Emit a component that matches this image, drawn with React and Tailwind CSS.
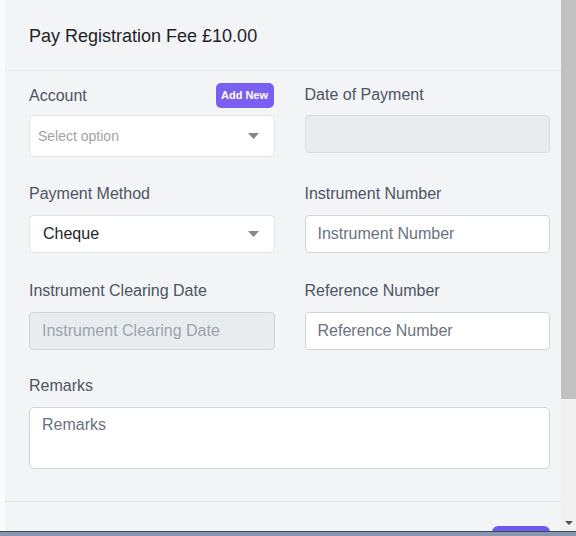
import React from "react";

function Caret() {
  return (
    <svg width="11" height="6" viewBox="0 0 11 6" className="shrink-0">
      <path d="M0 0 L11 0 L5.5 6 Z" fill="#888888" />
    </svg>
  );
}

function Label({ children }) {
  return <div className="h-6 mb-[9px] text-base leading-6 text-[#4b5563]">{children}</div>;
}

export default function App() {
  return (
    <div
      className="w-[576px] h-[536px] overflow-hidden flex flex-col bg-white"
      style={{ fontFamily: '"Liberation Sans", Arial, sans-serif' }}
    >
      <div className="flex flex-1 min-h-0">
        <div className="w-[5px] bg-[#fbfbfb] shrink-0" />
        <div className="flex-1 bg-[#f3f4f6] flex flex-col min-w-0">
          <div className="pl-6 pr-[11px] pt-[22px] pb-[20px] border-b border-dotted border-[#e3e5e8]">
            <h2 className="text-lg leading-7 text-[#1f2328]">Pay Registration Fee £10.00</h2>
          </div>
          <div className="pl-6 pr-[11px] pt-3 pb-8 border-b border-[#e5e7eb]">
            <div className="grid grid-cols-2 gap-x-[30px] gap-y-[25px] items-start">
              <div>
                <div className="flex items-center justify-between h-[25px] mb-[7px]">
                  <span className="text-base leading-6 text-[#4b5563]">Account</span>
                  <button className="h-[25px] w-[58px] mr-[1px] rounded-[5px] bg-[#7a5ff0] text-white text-[11px] font-semibold">
                    Add New
                  </button>
                </div>
                <div className="h-[42px] rounded-[4px] border border-[#e2e4e8] bg-white flex items-center justify-between pl-2 pr-[15px]">
                  <span className="text-sm text-[#a3a3a3]">Select option</span>
                  <Caret />
                </div>
              </div>
              <div>
                <div className="h-6 mb-[8px] text-base leading-6 text-[#4b5563]">Date of Payment</div>
                <div className="h-[38px] rounded-[4px] border border-[#d9dde2] bg-[#e9ecef]" />
              </div>
              <div>
                <Label>Payment Method</Label>
                <div className="h-[38px] rounded-[4px] border border-[#e2e4e8] bg-white flex items-center justify-between pl-[13px] pr-[15px]">
                  <span className="text-base text-[#212529]">Cheque</span>
                  <Caret />
                </div>
              </div>
              <div>
                <Label>Instrument Number</Label>
                <div className="h-[38px] rounded-[4px] border border-[#d1d5db] bg-white flex items-center px-3">
                  <span className="text-base text-[#6b7280]">Instrument Number</span>
                </div>
              </div>
              <div className="mt-[1px]">
                <Label>Instrument Clearing Date</Label>
                <div className="h-[38px] rounded-[4px] border border-[#d1d5db] bg-[#e9ecef] flex items-center px-3">
                  <span className="text-base text-[#9ca3af]">Instrument Clearing Date</span>
                </div>
              </div>
              <div className="mt-[1px]">
                <Label>Reference Number</Label>
                <div className="h-[38px] rounded-[4px] border border-[#d1d5db] bg-white flex items-center px-3">
                  <span className="text-base text-[#6b7280]">Reference Number</span>
                </div>
              </div>
              <div className="col-span-2 mt-[-1px]">
                <Label>Remarks</Label>
                <div className="h-[62px] rounded-[5px] border border-[#d1d5db] bg-white px-3 pt-[5px]">
                  <span className="text-base leading-6 text-[#6b7280]">Remarks</span>
                </div>
              </div>
            </div>
          </div>
          <div className="pl-6 pr-[11px] pt-6 flex justify-end">
            <button aria-label="Save" className="h-[34px] w-[58px] rounded-[6px] bg-[#6f58f0] shrink-0" />
          </div>
        </div>
        <div className="w-[15px] shrink-0 bg-[#f1f1f1] flex flex-col justify-between">
          <div className="h-[399px] bg-[#c1c1c1]" />
          <div className="flex justify-center pb-[6px]">
            <svg width="8" height="4" viewBox="0 0 8 4">
              <path d="M0 0 L8 0 L4 4 Z" fill="#505050" />
            </svg>
          </div>
        </div>
      </div>
      <div className="h-[5px] shrink-0 border-t border-[#3d4654] bg-[#8497ae]" />
    </div>
  );
}
